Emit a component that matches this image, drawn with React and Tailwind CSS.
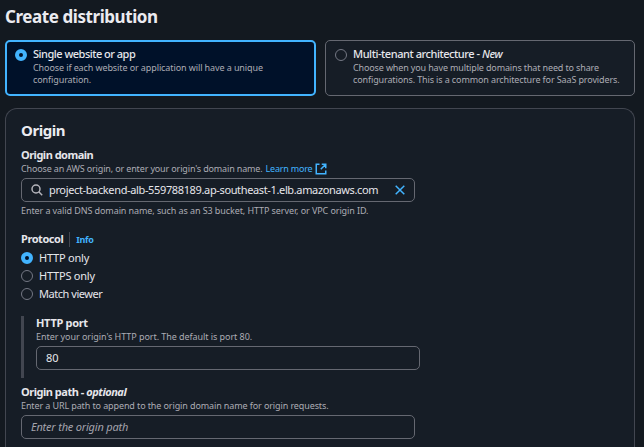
import React from "react";

function Radio({ checked }) {
  return checked ? (
    <span className="block size-3 shrink-0 rounded-full border-4 border-[#42b4ff] bg-[#001129]" />
  ) : (
    <span className="block size-3 shrink-0 rounded-full border border-[#747884] bg-[#161d26]" />
  );
}

function Label({ children, className = "" }) {
  return (
    <div className={`h-[14px] whitespace-nowrap text-[11px] leading-[14px] text-[#e6e6eb] ${className}`}>
      {children}
    </div>
  );
}

function Hint({ children, color = "text-[#acacb4]", className = "" }) {
  return (
    <div className={`h-3 whitespace-nowrap text-[9px] leading-3 ${color} ${className}`}>
      {children}
    </div>
  );
}

function ChoiceCard({ checked, title, lines, className }) {
  return (
    <div className={`h-14 rounded-[5px] ${className}`}>
      <div className="flex gap-1.5">
        <div className="pt-[1px]">
          <Radio checked={checked} />
        </div>
        <div className="-mt-px">
          <Label className="mb-px font-medium">{title}</Label>
          {lines.map(([text, tracking]) => (
            <Hint key={text} className={tracking}>{text}</Hint>
          ))}
        </div>
      </div>
    </div>
  );
}

function Field({ children, color = "text-[#e6e6eb]", className = "" }) {
  return (
    <div className={`flex h-6 items-center whitespace-nowrap rounded-[5px] border border-[#656871] text-[11px] leading-[14px] ${color} ${className}`}>
      {children}
    </div>
  );
}

export default function App() {
  const protocols = [
    ["HTTP only", true, "tracking-[-0.22px]"],
    ["HTTPS only", false, "tracking-[-0.22px]"],
    ["Match viewer", false, "tracking-[-0.46px]"],
  ];
  return (
    <div className="h-[447px] w-[644px] overflow-hidden bg-[#131920] pl-[5px] font-['Noto_Sans','Open_Sans',sans-serif]">
      <h1 className="h-10 whitespace-nowrap pt-[6px] text-[17px] font-bold leading-[22px] tracking-[-0.43px] text-[#ebebf0]">
        Create distribution
      </h1>
      <div className="flex gap-[9px]">
        <ChoiceCard
          checked
          title={<span className="tracking-[-0.5px]">Single website or app</span>}
          lines={[
            ["Choose if each website or application will have a unique", "tracking-[-0.1px]"],
            ["configuration.", "tracking-[-0.1px]"],
          ]}
          className="w-[311px] border-2 border-[#42b4ff] bg-[#001129] pl-2 pt-[6px]"
        />
        <ChoiceCard
          title={<span className="tracking-[-0.44px]">Multi-tenant architecture - <i>New</i></span>}
          lines={[
            ["Choose when you have multiple domains that need to share", "tracking-[-0.14px]"],
            ["configurations. This is a common architecture for SaaS providers.", "tracking-[-0.12px]"],
          ]}
          className="w-[310px] border border-[#656871] bg-[#161d26] pl-[9px] pt-[7px]"
        />
      </div>
      <div className="mt-3 h-[360px] w-[630px] rounded-t-[12px] border border-b-0 border-[#424650] bg-[#161d26] pl-[15px]">
        <h2 className="h-[39px] whitespace-nowrap pt-[11px] text-[15px] font-bold leading-5 tracking-[-0.45px] text-[#ebebf0]">
          Origin
        </h2>
        <Label className="font-bold tracking-[-0.5px]">Origin domain</Label>
        <Hint className="mt-px flex">
          <span className="tracking-[-0.15px]">Choose an AWS origin, or enter your origin's domain name.</span>
          <span className="ml-[3px] tracking-[-0.2px] text-[#42b4ff]">Learn more</span>
          <svg className="ml-[3px] size-3" viewBox="0 0 12 12" fill="none" stroke="#42b4ff" strokeWidth="1.5">
            <path d="M4.5 1.25H1.25V10.75H10.75V7.5M6.75 1.25H10.75V5.25M10.75 1.25L5.75 6.25" />
          </svg>
        </Hint>
        <Field className="mt-[3px] w-[394px] pl-[9px] pr-[9px]">
          <svg className="size-3 shrink-0" viewBox="0 0 12 12" fill="none" stroke="#b4b4bb" strokeWidth="1.5">
            <circle cx="5" cy="5" r="4" />
            <path d="M7.8 7.8L11.2 11.2" />
          </svg>
          <span className="ml-[6px] tracking-[-0.36px]">project-backend-alb-559788189.ap-southeast-1.elb.amazonaws.com</span>
          <svg className="ml-auto size-[10px] shrink-0" viewBox="0 0 10 10" fill="none" stroke="#42b4ff" strokeWidth="1.5">
            <path d="M.7.7L9.3 9.3M9.3.7L.7 9.3" />
          </svg>
        </Field>
        <Hint className="mt-[3px] tracking-[-0.09px]">Enter a valid DNS domain name, such as an S3 bucket, HTTP server, or VPC origin ID.</Hint>
        <div className="mt-[15px] flex h-[15px] items-center">
          <Label className="-mt-px font-bold tracking-[-0.45px]">Protocol</Label>
          <span className="ml-[6px] h-[15px] w-px bg-[#424650]" />
          <Hint color="text-[#42b4ff]" className="ml-[6px] font-bold tracking-[-0.3px]">Info</Hint>
        </div>
        <div className="mt-[2px]">
          {protocols.map(([name, checked, tracking]) => (
            <div key={name} className="flex h-[18px] items-center gap-1.5">
              <Radio checked={checked} />
              <Label className={`-mt-px ${tracking}`}>{name}</Label>
            </div>
          ))}
        </div>
        <div className="mt-[13px] h-[62px] border-l-[3px] border-[#424650] pl-3">
          <Label className="font-bold tracking-[-0.3px]">HTTP port</Label>
          <Hint className="mt-px tracking-[-0.06px]">Enter your origin's HTTP port. The default is port 80.</Hint>
          <Field className="mt-[3px] w-[384px] pl-[9px] tracking-[-0.1px]">80</Field>
        </div>
        <Label className="mt-[7px] font-bold tracking-[-0.47px]">Origin path - <i>optional</i></Label>
        <Hint className="mt-px tracking-[-0.11px]">Enter a URL path to append to the origin domain name for origin requests.</Hint>
        <Field color="text-[#a4a4ad]" className="mt-[3px] w-[394px] pl-[9px] italic tracking-[-0.2px]">Enter the origin path</Field>
      </div>
    </div>
  );
}
